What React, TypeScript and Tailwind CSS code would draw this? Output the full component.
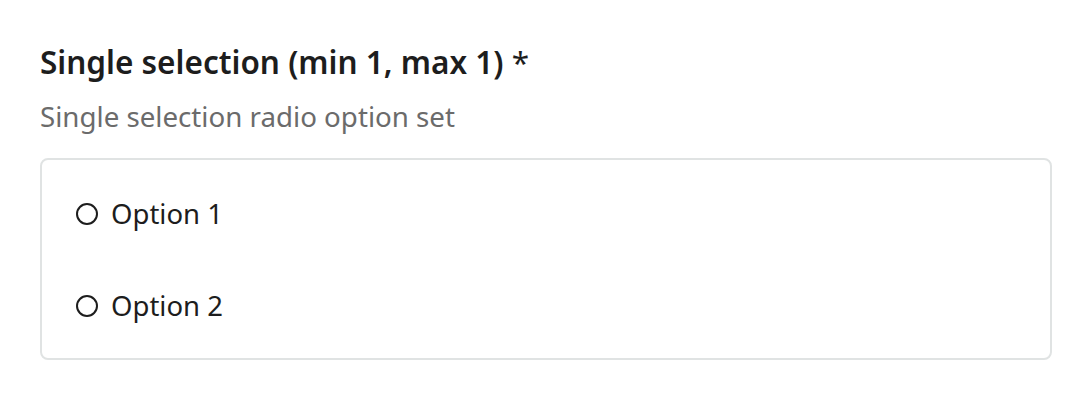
export default function App() {
  const options = ['Option 1', 'Option 2'];
  return (
    <div className="min-h-screen bg-white px-10 pt-[42px] font-['Noto_Sans',sans-serif]">
      <h2 className="text-[31.5px] font-semibold leading-[40px] text-[#1d1d1d]">
        Single selection (min 1, max 1) <span className="font-normal">*</span>
      </h2>
      <p className="mt-[15px] text-[27.7px] leading-[38px] text-[#6b6b6b]">
        Single selection radio option set
      </p>
      <div className="mt-[23px] flex w-[1012px] flex-col gap-[54px] rounded-[8px] border-2 border-[#e0e3e3] pb-[33px] pl-[34px] pr-[34px] pt-[35px]">
        {options.map((label) => (
          <label key={label} className="flex items-center gap-[13px] text-[27.5px] leading-[38px] text-[#1d1d1d]">
            <span className="h-[22px] w-[22px] rounded-full border-2 border-[#1d1d1d]" />
            {label}
          </label>
        ))}
      </div>
    </div>
  );
}
